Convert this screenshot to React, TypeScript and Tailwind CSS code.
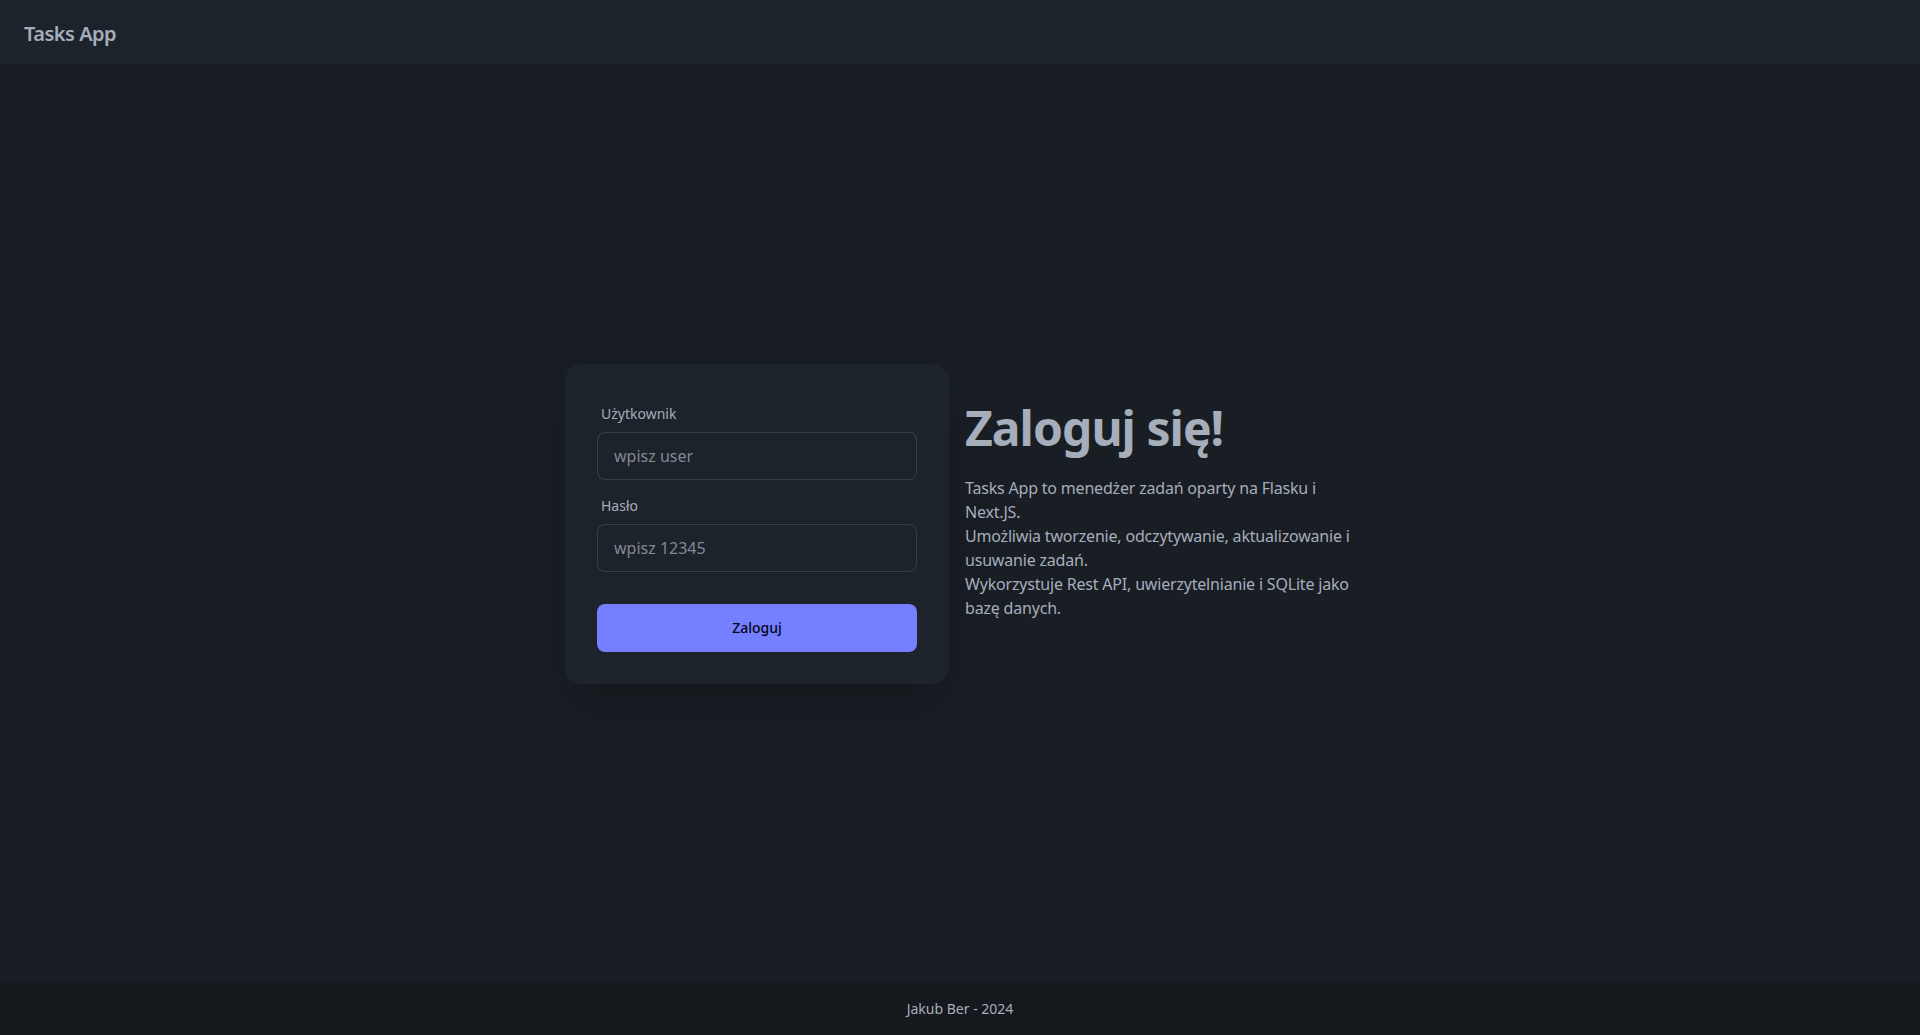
export default function App() {
  return (
    <div
      className="min-h-screen flex flex-col bg-[#191e24] text-[#a6adbb]"
      style={{ fontFamily: '"Noto Sans", "Open Sans", sans-serif' }}
    >
      {/* Navbar */}
      <header className="h-16 flex items-center px-2 pt-1 bg-[#1d232a]">
        <span className="px-4 text-xl font-semibold tracking-tight">Tasks App</span>
      </header>

      {/* Hero */}
      <main className="flex-1 flex items-center justify-center">
        <div className="flex items-center gap-4">
          <div className="w-96 rounded-2xl bg-[#1d232a] p-8 shadow-2xl flex flex-col gap-2">
            <div className="flex flex-col">
              <label className="px-1 py-2 text-sm leading-5">Użytkownik</label>
              <input
                type="text"
                placeholder="wpisz user"
                className="h-12 px-4 rounded-lg border border-[#a6adbb]/20 bg-[#1d232a] text-base outline-none placeholder:text-[#a6adbb]/75"
              />
            </div>
            <div className="flex flex-col">
              <label className="px-1 py-2 text-sm leading-5">Hasło</label>
              <input
                type="password"
                placeholder="wpisz 12345"
                className="h-12 px-4 rounded-lg border border-[#a6adbb]/20 bg-[#1d232a] text-base outline-none placeholder:text-[#a6adbb]/75"
              />
            </div>
            <button className="mt-6 h-12 rounded-lg bg-[#7480ff] text-[#050617] text-sm font-medium">
              Zaloguj
            </button>
          </div>

          <div className="w-[390px]">
            <h1 className="text-5xl leading-none font-bold tracking-[-0.02em]">Zaloguj się!</h1>
            <p className="py-6 text-base leading-6 tracking-[-0.012em]">
              Tasks App to menedżer zadań oparty na Flasku i Next.JS.
              <br />
              Umożliwia tworzenie, odczytywanie, aktualizowanie i usuwanie zadań.
              <br />
              Wykorzystuje Rest API, uwierzytelnianie i SQLite jako bazę danych.
            </p>
          </div>
        </div>
      </main>

      {/* Footer */}
      <footer className="p-4 bg-[#15191e] flex justify-center">
        <p className="text-sm leading-5">Jakub Ber - 2024</p>
      </footer>
    </div>
  )
}
